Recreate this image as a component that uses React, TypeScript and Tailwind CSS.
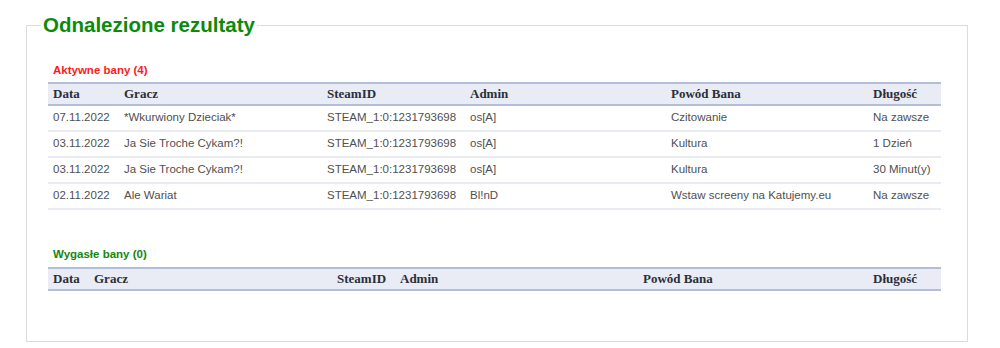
const activeBans = [
  { date: "07.11.2022", player: "*Wkurwiony Dzieciak*", steam: "STEAM_1:0:1231793698", admin: "os[A]", reason: "Czitowanie", length: "Na zawsze" },
  { date: "03.11.2022", player: "Ja Sie Troche Cykam?!", steam: "STEAM_1:0:1231793698", admin: "os[A]", reason: "Kultura", length: "1 Dzień" },
  { date: "03.11.2022", player: "Ja Sie Troche Cykam?!", steam: "STEAM_1:0:1231793698", admin: "os[A]", reason: "Kultura", length: "30 Minut(y)" },
  { date: "02.11.2022", player: "Ale Wariat", steam: "STEAM_1:0:1231793698", admin: "Bl!nD", reason: "Wstaw screeny na Katujemy.eu", length: "Na zawsze" },
];

const headers = ["Data", "Gracz", "SteamID", "Admin", "Powód Bana", "Długość"];

function BanTable({ widths, rows }: { widths: number[]; rows: typeof activeBans }) {
  return (
    <table className="w-[893px] table-fixed border-collapse">
      <colgroup>
        {widths.map((w, i) => (
          <col key={i} style={{ width: w }} />
        ))}
      </colgroup>
      <thead>
        <tr className="bg-[#e9ecf4] border-y-2 border-[#b3bfd9]">
          {headers.map((h) => (
            <th
              key={h}
              className="h-[18px] px-[5px] text-left font-bold text-[13px] text-[#2b2f3a] font-['Liberation_Serif',serif]"
            >
              {h}
            </th>
          ))}
        </tr>
      </thead>
      <tbody>
        {rows.map((r, i) => (
          <tr key={i} className="border-b-2 border-[#e8ebf2] h-[26px] text-[11.5px] text-[#505050]">
            <td className="px-[5px]">{r.date}</td>
            <td className="px-[5px]">{r.player}</td>
            <td className="px-[5px]">{r.steam}</td>
            <td className="px-[5px]">{r.admin}</td>
            <td className="px-[5px]">{r.reason}</td>
            <td className="px-[5px]">{r.length}</td>
          </tr>
        ))}
      </tbody>
    </table>
  );
}

export default function App() {
  return (
    <div className="w-[1000px] h-[348px] bg-white font-['Liberation_Sans',Arial,sans-serif] pt-[14px]">
      <fieldset className="ml-[26px] w-[942px] h-[328px] border border-[#dcdcdc] px-[14px]">
        <legend className="px-[2px] text-[20.5px] font-bold text-[#0c8a0c] leading-[22px]">
          Odnalezione rezultaty
        </legend>
        <div className="ml-[7px]">
          <h3 className="mt-[26px] mb-[3px] pl-[5px] text-[11.5px] font-bold text-[#ff1a1a]">Aktywne bany (4)</h3>
          <BanTable widths={[71, 203, 143, 201, 202, 73]} rows={activeBans} />
          <h3 className="mt-[36px] mb-[4px] pl-[5px] text-[11.5px] font-bold text-[#14860f]">Wygasłe bany (0)</h3>
          <BanTable widths={[41, 243, 63, 243, 230, 73]} rows={[]} />
        </div>
      </fieldset>
    </div>
  );
}
